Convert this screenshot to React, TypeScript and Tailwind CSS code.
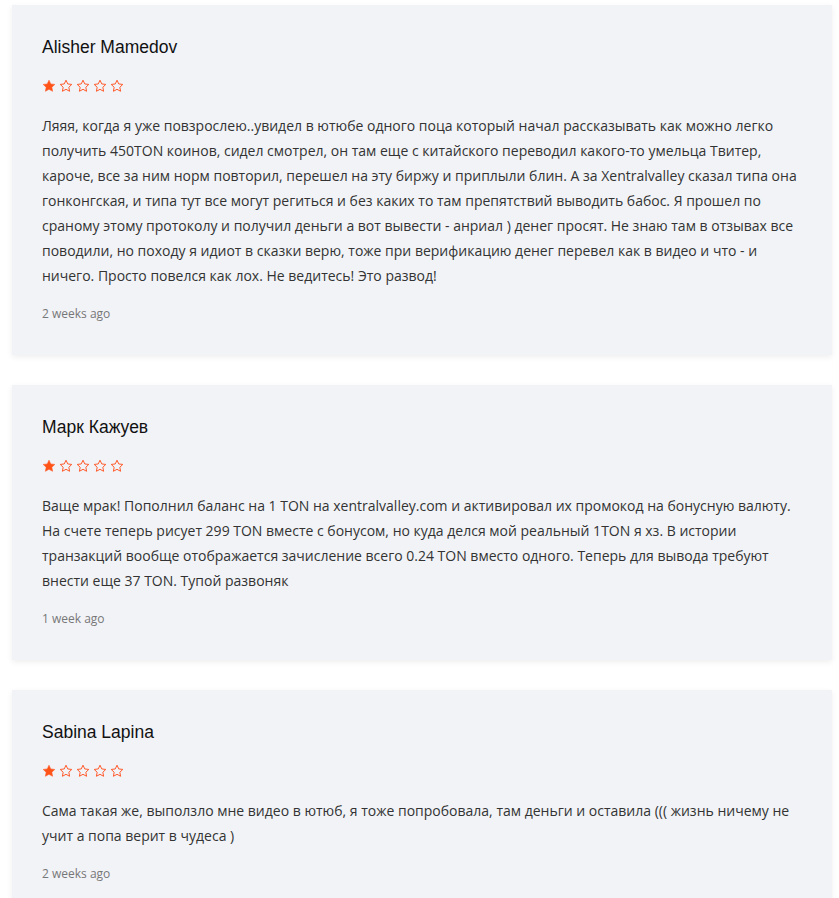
import React from 'react';

type Review = {
  author: string;
  rating: number;
  text: string;
  date: string;
};

const reviews: Review[] = [
  {
    author: 'Alisher Mamedov',
    rating: 1,
    text:
      'Ляяя, когда я уже повзрослею..увидел в ютюбе одного поца который начал рассказывать как можно легко получить 450TON коинов, сидел смотрел, он там еще с китайского переводил какого-то умельца Твитер, кароче, все за ним норм повторил, перешел на эту биржу и приплыли блин. А за Xentralvalley сказал типа она гонконгская, и типа тут все могут региться и без каких то там препятствий выводить бабос. Я прошел по сраному этому протоколу и получил деньги а вот вывести - анриал ) денег просят. Не знаю там в отзывах все поводили, но походу я идиот в сказки верю, тоже при верификацию денег перевел как в видео и что - и ничего. Просто повелся как лох. Не ведитесь! Это развод!',
    date: '2 weeks ago',
  },
  {
    author: 'Марк Кажуев',
    rating: 1,
    text:
      'Ваще мрак! Пополнил баланс на 1 TON на xentralvalley.com и активировал их промокод на бонусную валюту. На счете теперь рисует 299 TON вместе с бонусом, но куда делся мой реальный 1TON я хз. В истории транзакций вообще отображается зачисление всего 0.24 TON вместо одного. Теперь для вывода требуют внести еще 37 TON. Тупой развоняк',
    date: '1 week ago',
  },
  {
    author: 'Sabina Lapina',
    rating: 1,
    text:
      'Сама такая же, выползло мне видео в ютюб, я тоже попробовала, там деньги и оставила ((( жизнь ничему не учит а попа верит в чудеса )',
    date: '2 weeks ago',
  },
];

const STAR_PATH =
  'M7 1.2l1.75 3.75 4.05.5-2.98 2.8.78 4.02L7 10.3l-3.6 1.97.78-4.02L1.2 5.45l4.05-.5z';

function Star({ filled }: { filled: boolean }) {
  return (
    <svg width="14" height="14" viewBox="0 0 14 14" className="block">
      <path
        d={STAR_PATH}
        fill={filled ? '#ff5317' : 'none'}
        stroke="#ff5a2a"
        strokeWidth={filled ? 0.6 : 1}
        strokeLinejoin="round"
      />
    </svg>
  );
}

function ReviewCard({ review }: { review: Review }) {
  return (
    <div className="bg-[#f2f3f7] shadow-[0_2px_6px_rgba(0,0,0,0.07)] pl-[30px] pr-[30px] pt-[29px] pb-[32px]">
      <h3 className="font-['Liberation_Sans',Arial,sans-serif] text-[17.5px] leading-[27px] text-[#111]">
        {review.author}
      </h3>

      <div className="flex gap-[3px] mt-[18px] mb-[20px]">
        {[0, 1, 2, 3, 4].map(i => (
          <Star key={i} filled={i < review.rating} />
        ))}
      </div>

      <p className="font-['Open_Sans',sans-serif] text-[14px] leading-[25px] text-[#333]">
        {review.text}
      </p>

      <p className="mt-[17px] font-['Open_Sans',sans-serif] text-[12px] leading-[18px] text-[#777]">
        {review.date}
      </p>
    </div>
  );
}

export default function App() {
  return (
    <div className="min-h-screen bg-white pt-[5px] pl-[12px] pr-[7px]">
      <div className="flex flex-col gap-[30px]">
        {reviews.map(r => (
          <ReviewCard key={r.author} review={r} />
        ))}
      </div>
    </div>
  );
}
